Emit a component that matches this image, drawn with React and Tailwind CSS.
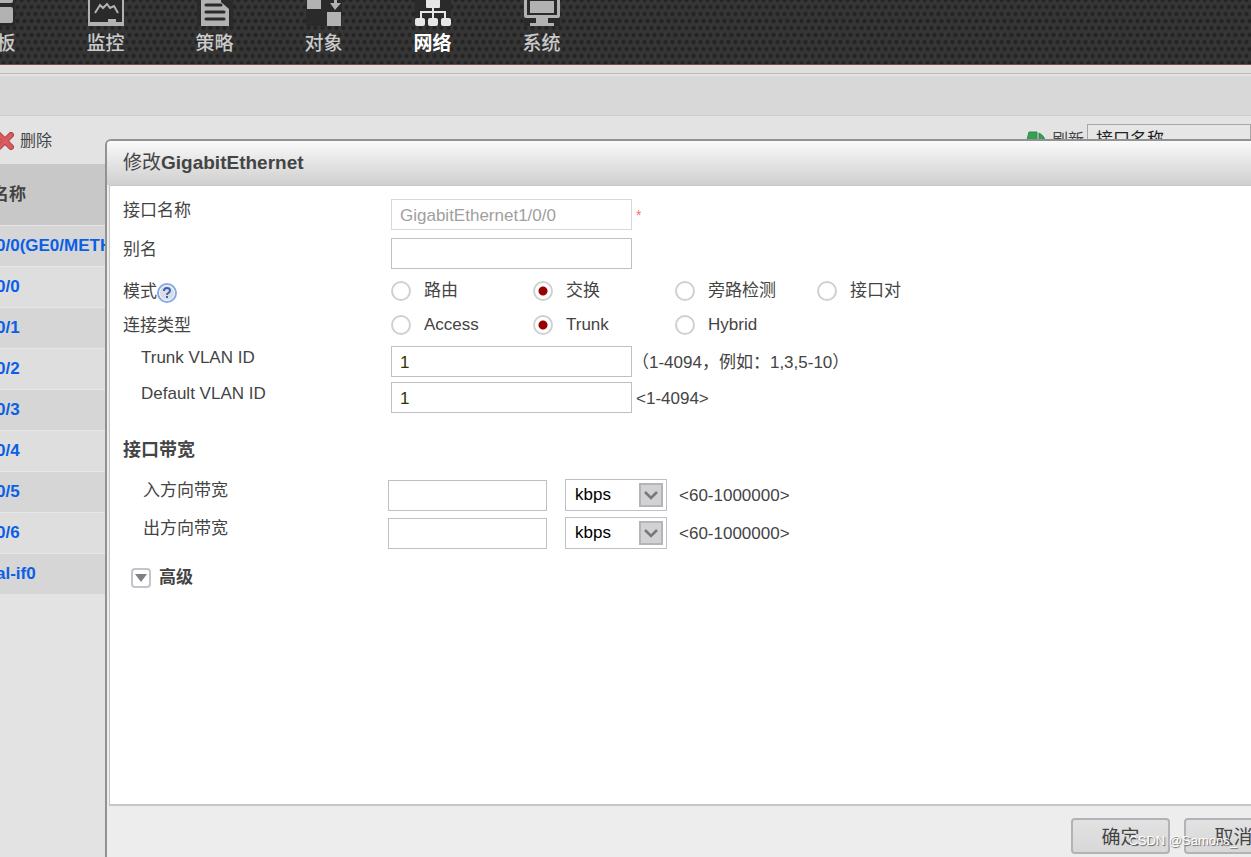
import { useState } from "react";

const NavIcon = ({ children }) => (
  <svg viewBox="0 0 36 36" className="h-9 w-9 bg-[#2a2a2a]" fill="currentColor" aria-hidden="true">
    {children}
  </svg>
);

const navItems = [
  {
    label: "面板",
    icon: (
      <>
        <rect x="0" y="0" width="15" height="13" rx="2" />
        <rect x="19" y="0" width="15" height="13" rx="2" />
        <rect x="0" y="17" width="34" height="16" rx="2" />
      </>
    ),
  },
  {
    label: "监控",
    icon: (
      <>
        <path d="M0 4h36v32H0zM2 7v25h18v-3h8v3h6V7z" fillRule="evenodd" />
        <path d="M7 23l5-8 3 3 4-4 3 4 4-2 4 7" fill="none" stroke="currentColor" strokeWidth="2" />
      </>
    ),
  },
  {
    label: "策略",
    icon: (
      <>
        <path d="M4 2h19l9 15v19H4z" />
        <path d="M9 15h15M9 22h18M9 29h18" stroke="#2a2a2a" strokeWidth="3" strokeLinecap="round" />
        <path d="M24 6v6l8 7V6z" fill="#2a2a2a" />
      </>
    ),
  },
  {
    label: "对象",
    icon: (
      <>
        <rect x="1" y="5" width="14" height="14" />
        <rect x="21" y="22" width="14" height="14" />
        <path d="M28 5h3v8h4l-6 7-5-7h4z" />
      </>
    ),
  },
  {
    label: "网络",
    active: true,
    icon: (
      <>
        <rect x="11" y="4" width="14" height="14" rx="1" />
        <path d="M18 16v12M6 28v-6h24v6" fill="none" stroke="currentColor" strokeWidth="2" />
        <rect x="0" y="28" width="10" height="8" rx="2" />
        <rect x="13" y="28" width="10" height="8" rx="2" />
        <rect x="26" y="28" width="10" height="8" rx="2" />
      </>
    ),
  },
  {
    label: "系统",
    icon: (
      <>
        <path d="M0 5h36v21q0 2-2 2H2q-2 0-2-2zM3 7v18h30V7z" fillRule="evenodd" />
        <rect x="6" y="11" width="24" height="12" />
        <path d="M12 28h12v5h6v3H6v-3h6z" />
      </>
    ),
  },
];

const interfaces = ["0/0(GE0/METH)", "0/0", "0/1", "0/2", "0/3", "0/4", "0/5", "0/6", "al-if0"];

const TopNav = () => (
  <header className="shrink-0 overflow-hidden border-b border-[#7c4a4a] bg-[#363637] bg-[radial-gradient(circle,#222_1px,transparent_3px),radial-gradient(circle,#222_1px,transparent_3px)] bg-[size:7px_14px] bg-[position:0_0,4px_7px]">
    <nav className="-ml-[58px] flex h-16 items-end">
      {navItems.map(({ label, icon, active }) => (
        <a
          key={label}
          href="#"
          className={`flex w-[109px] shrink-0 flex-col items-center gap-1 pb-1.5 text-[19px] leading-7 ${
            active ? "font-bold text-white" : "font-medium text-[#cacaca]"
          }`}
        >
          <span className={active ? "text-[#e6e6e6]" : "text-[#b2b2b2]"}>
            <NavIcon>{icon}</NavIcon>
          </span>
          {label}
        </a>
      ))}
    </nav>
  </header>
);

const Toolbar = () => (
  <div className="flex h-12 justify-between text-base text-[#444]">
    <button type="button" className="-ml-1 flex items-center gap-1.5 pt-0.5">
      <svg viewBox="0 0 18 18" className="h-[18px] w-[18px]" aria-hidden="true">
        <path d="M3 3l12 12M15 3L3 15" stroke="#b33f44" strokeWidth="6" strokeLinecap="round" />
        <path d="M3 3l12 12M15 3L3 15" stroke="#d95b5f" strokeWidth="4" strokeLinecap="round" />
      </svg>
      删除
    </button>
    <div className="flex w-[225px] items-start pt-2">
      <button type="button" className="flex w-[61px] shrink-0 items-center gap-1.5 pt-1">
        <svg viewBox="0 0 20 20" className="h-5 w-5 shrink-0" aria-hidden="true">
          <path d="M3 2h8v9H8v3H5v-4H1z" fill="#3a9e54" stroke="#2f8b48" />
          <path d="M13 3q6 3 6 9-1 5-6 6l-3-4 3-3z" fill="#3a9e54" stroke="#2f8b48" />
        </svg>
        <span className="whitespace-nowrap">刷新</span>
      </button>
      <select
        aria-label="查询条件"
        className="h-8 grow appearance-none border border-[#a6a6a6] bg-[#e6e6e6] px-2 text-[17px] leading-6 text-[#222]"
      >
        <option>接口名称</option>
      </select>
    </div>
  </div>
);

const InterfaceTable = () => (
  <table className="w-full border-collapse text-left text-[17px]">
    <thead>
      <tr className="h-[61px] bg-[#c8c8c8] text-[#444]">
        <th className="p-0">
          <span className="-ml-2">名称</span>
        </th>
      </tr>
    </thead>
    <tbody>
      {interfaces.map((name) => (
        <tr key={name} className="h-[41px] border-t border-[#e6e6e6] odd:bg-[#d6d6d6] even:bg-[#dedede]">
          <td className="p-0 font-bold">
            <a href="#" className="-ml-1 text-[#0a5fe6]">
              {name}
            </a>
          </td>
        </tr>
      ))}
    </tbody>
  </table>
);

const Field = ({ id, label, labelClass = "w-[268px]", hint, children }) => (
  <div className="flex items-start">
    <label htmlFor={id} className={`shrink-0 leading-6 ${labelClass}`}>
      {label}
    </label>
    <div className="flex items-center">
      {children}
      {hint}
    </div>
  </div>
);

const TextInput = ({ className = "w-[241px]", ...props }) => (
  <input
    type="text"
    className={`h-[31px] border border-[#bfc0c6] bg-white px-2 pt-0.5 text-[#333300] disabled:border-[#d8d8da] disabled:text-[#a0a0a0] ${className}`}
    {...props}
  />
);

const RadioRow = ({ name, label, help, options, value, onChange }) => (
  <div role="radiogroup" aria-label={label} className="flex h-[34px] items-center">
    <div className="flex w-[268px] shrink-0 items-center pt-0.5">
      {label}
      {help}
    </div>
    {options.map((option) => (
      <label key={option} className="flex w-[142px] shrink-0 items-center gap-[13px]">
        <input
          type="radio"
          name={name}
          checked={value === option}
          onChange={() => onChange(option)}
          className="h-5 w-5 appearance-none rounded-full border-2 border-[#d0d0d0] bg-white checked:bg-[radial-gradient(circle,#990000_4px,transparent_5px)]"
        />
        {option}
      </label>
    ))}
  </div>
);

const HelpIcon = () => (
  <button type="button" aria-label="帮助" className="mt-0.5">
    <svg viewBox="0 0 20 20" className="h-5 w-5" aria-hidden="true">
      <circle cx="10" cy="10" r="9" fill="#d9dde5" stroke="#86a9e6" strokeWidth="2" />
      <circle cx="10" cy="10" r="7.5" fill="none" stroke="#f4f7fc" />
      <path d="M7 8q0-3 3-3t3 2.5q0 1.5-1.500 2.300T10 12" fill="none" stroke="#3c64a8" strokeWidth="2" />
      <rect x="9" y="13" width="2" height="2" fill="#3c64a8" />
    </svg>
  </button>
);

const UnitSelect = ({ label }) => (
  <div className="relative ml-[18px] mr-3">
    <select
      aria-label={label}
      className="block h-8 w-[102px] appearance-none border border-[#bfc0c6] bg-white px-[9px] text-black"
    >
      <option>kbps</option>
      <option>Mbps</option>
    </select>
    <span className="pointer-events-none absolute right-1 top-1 flex h-6 w-6 items-center justify-center border-2 border-[#b4b5ba] bg-[#d2d2d4]">
      <svg viewBox="0 0 14 10" className="h-2.5 w-3.5 shrink-0" aria-hidden="true">
        <path d="M1 2l6 6 6-6" fill="none" stroke="#77787c" strokeWidth="2.5" />
      </svg>
    </span>
  </div>
);

const DialogButton = ({ children }) => (
  <button
    type="button"
    className="h-9 w-[99px] rounded-sm border-2 border-[#b2b3b9] bg-linear-to-b from-[#e2e2e2] to-[#d8d8d8] pt-1 text-[19px] leading-7 text-[#444]"
  >
    {children}
  </button>
);

const EditDialog = () => {
  const [mode, setMode] = useState("交换");
  const [linkType, setLinkType] = useState("Trunk");

  return (
    <div
      role="dialog"
      aria-labelledby="dialog-title"
      className="absolute -right-9 bottom-0 left-[105px] top-[139px] flex flex-col rounded-tl-md border-l-2 border-t-2 border-[#929292] bg-[#ededed]"
    >
      <h2
        id="dialog-title"
        className="h-11 shrink-0 rounded-tl bg-linear-to-b from-[#fafafa] to-[#cfcfcf] pl-4 text-[19px] font-bold leading-[44px] text-[#444]"
      >
        <span className="font-normal">修改</span>GigabitEthernet
      </h2>
      <form className="ml-0.5 grow border-b-2 border-l border-t border-[#c6c6c8] bg-white pl-[13px] pt-[13px] text-[17px] text-[#444]">
        <div className="flex flex-col gap-2">
          <Field id="if-name" label="接口名称" hint={<span className="ml-1 text-sm text-[#ff6a6a]">*</span>}>
            <TextInput id="if-name" defaultValue="GigabitEthernet1/0/0" disabled />
          </Field>
          <Field id="alias" label="别名">
            <TextInput id="alias" />
          </Field>
        </div>

        <div className="mt-[5px]">
          <RadioRow
            name="mode"
            label="模式"
            help={<HelpIcon />}
            options={["路由", "交换", "旁路检测", "接口对"]}
            value={mode}
            onChange={setMode}
          />
          <RadioRow
            name="link-type"
            label="连接类型"
            options={["Access", "Trunk", "Hybrid"]}
            value={linkType}
            onChange={setLinkType}
          />
        </div>

        <div className="mt-1 flex flex-col gap-[5px]">
          <Field
            id="trunk-vlan"
            label="Trunk VLAN ID"
            labelClass="w-[268px] pl-[18px]"
            hint={<span className="pt-0.5">（1-4094，例如：1,3,5-10）</span>}
          >
            <TextInput id="trunk-vlan" defaultValue="1" />
          </Field>
          <Field
            id="default-vlan"
            label="Default VLAN ID"
            labelClass="w-[268px] pl-[18px]"
            hint={<span className="ml-1 pt-0.5">&lt;1-4094&gt;</span>}
          >
            <TextInput id="default-vlan" defaultValue="1" />
          </Field>
        </div>

        <h3 className="mt-6 text-lg font-bold leading-[26px]">接口带宽</h3>
        <div className="mt-4 flex flex-col gap-1.5">
          {["入方向带宽", "出方向带宽"].map((label) => (
            <Field
              key={label}
              id={label}
              label={label}
              labelClass="w-[265px] pl-5"
              hint={<span className="pt-0.5">&lt;60-1000000&gt;</span>}
            >
              <TextInput id={label} className="w-[159px]" />
              <UnitSelect label={`${label}单位`} />
            </Field>
          ))}
        </div>

        <button type="button" className="mt-[18px] flex items-center gap-2 pl-2 font-bold leading-[22px]">
          <span className="flex h-5 w-5 items-center justify-center rounded-sm border-2 border-[#c4c4ca]">
            <svg viewBox="0 0 12 8" className="h-2 w-3" fill="#808084" aria-hidden="true">
              <path d="M0 0h12L6 8z" />
            </svg>
          </span>
          高级
        </button>
      </form>
      <footer className="flex h-[51px] shrink-0 items-center justify-end gap-3.5 pr-1 pt-2">
        <DialogButton>确定</DialogButton>
        <DialogButton>取消</DialogButton>
      </footer>
    </div>
  );
};

export default function App() {
  return (
    <div className="relative flex h-screen flex-col overflow-hidden bg-[#e3e3e3] font-['Liberation_Sans','Noto_Sans_CJK_SC',sans-serif]">
      <TopNav />
      <div className="h-[9px] shrink-0 border-b border-[#bcbcbc] bg-[#dfdfdf]" />
      <div className="h-[42px] shrink-0 border-b border-t-2 border-b-[#cecece] border-t-[#e2e2e2] bg-[#d8d8d8]" />
      <main>
        <Toolbar />
        <InterfaceTable />
      </main>
      <EditDialog />
      <p className="pointer-events-none absolute bottom-1.5 right-3.5 text-[13px] leading-5 text-white [text-shadow:1px_1px_1px_#666]">
        CSDN @Samons_
      </p>
    </div>
  );
}
